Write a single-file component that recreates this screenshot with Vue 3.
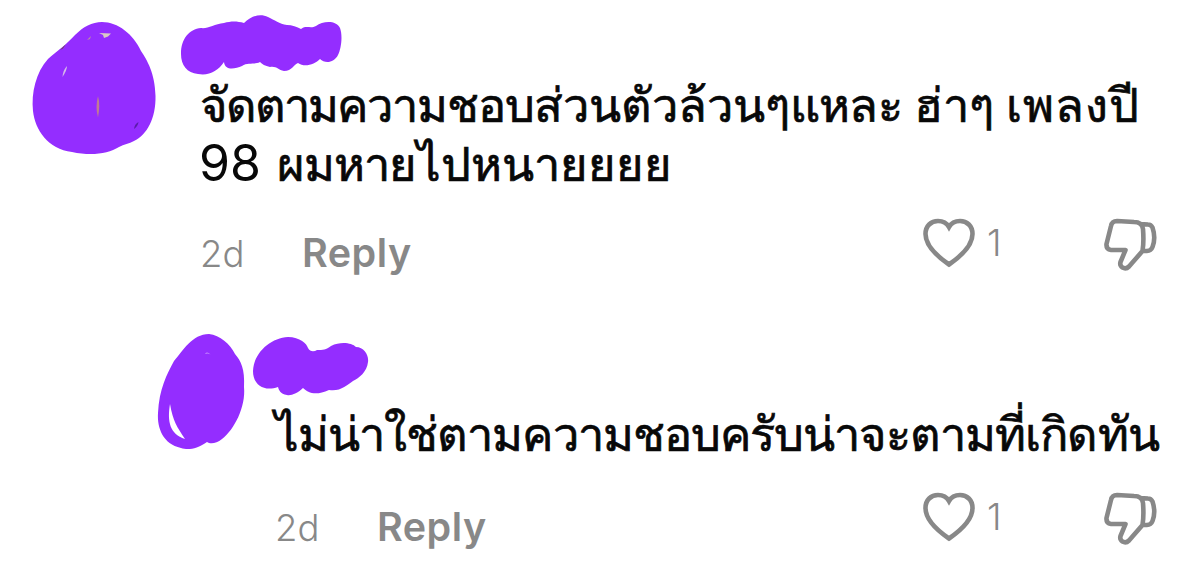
<script setup>
import { ref } from "vue"

const comments = ref([
  {
    id: 1,
    kind: "root",
    avatar: {
      box: "30 20 128 138",
      width: 128,
      height: 138,
      shape: "M102 22C118 22 133 34 141 51C147 60 155 73 155.500 96C156 118 147 135 134 141C129 144 124 144 119 147C108 154 91 156 72 152C48 149 35 130 33 111C31 93 36 72 48 59C57 51 66 45 75 35C83 27 92 22 102 22Z",
      gaps: [
        { d: "M99 33L111 33.500L108 36.500L104 38L103 35Z", fill: "#d9c9c4" },
        { d: "M87 40L91 36L90 39Z", fill: "#b98fa0" },
        { d: "M62.500 77Q63 70 67 66Q67 70 62.500 77Z", fill: "#d5b9e8" },
        { d: "M98 96Q100.500 105 98 117.500Q95 107 98 96Z", fill: "#c07a94" },
        { d: "M60 50L66 44L63 48.500Z", fill: "#6c4a50" },
        { d: "M134 129Q134.500 124 138.500 122Q138 126 134 129Z", fill: "#5a1cab" }
      ]
    },
    name: {
      box: "180 14 164 62",
      width: 164,
      height: 62,
      shape: "M181 54C181 39 189 29 201 28C208 29 214 24 224 23C231 21 237 21 244 23C251 16 260 13 268 17C275 20 279 24 287 25C292 25 297 27 301 29C306 25 311 29 316 26C323 21 336 20 340 28C343 36 341 49 338 55C334 63 325 64 320 59C315 64 305 68 298 63C294 64 292 71 284 71C278 70 277 66 270 67C265 66 262 64 260 62C254 65 248 62 242 66C235 69 225 71 224 62C218 71 209 76 198 74C187 73 181 65 181 54Z"
    },
    lines: [
      [
        { text: "จัดตาม", fit: "tightest" },
        { text: "ความชอบ", fit: "tight" },
        { text: "ส่วนตัวล้วนๆ", fit: "normal" },
        { text: "แหละ", fit: "tight" },
        { text: " ฮ่าๆ ", fit: "normal" },
        { text: "เพลงปี", fit: "loose" }
      ],
      [
        { text: "98", fit: "number" },
        { text: " ผมหาย", fit: "tight" },
        { text: "ไปหนายยยย", fit: "after" }
      ]
    ],
    time: "2d",
    likes: 1
  },
  {
    id: 2,
    kind: "child",
    avatar: {
      box: "156 332 90 120",
      width: 90,
      height: 120,
      shape: "M209 334C220 335 230 344 235 354C241 361 245 369 244 387C246 407 234 430 222 439C216 444 210 444 207 442C196 450 187 450 181 448C163 444 157 428 158 413C159 389 167 374 174 361C183 351 192 334 209 334Z",
      gaps: [
        { d: "M170 404C167 422 170 434 185 439C177 427 173 421 170 404Z", fill: "#fff" },
        { d: "M205 354Q207 351 210.500 354.500Q208 353 205 354Z", fill: "#c98bff" }
      ]
    },
    name: {
      box: "250 335 120 63",
      width: 120,
      height: 63,
      shape: "M253 371C254 352 271 338 288 337C300 337 307 344 308 348C310 352 314 352 317 350C323 350 326 350 331 346C341 341 352 343 356 347C364 347 369 355 368 362C367 372 359 378 353 381C347 385 340 392 329 390C316 396 308 393 303 388C298 393 291 396 287 395C280 394 279 390 278 387C264 392 253 385 253 371Z"
    },
    lines: [[{ text: "ไม่น่าใช่ตามความชอบครับน่าจะตามที่เกิดทัน", fit: "tight" }]],
    time: "2d",
    likes: 1
  }
])
</script>

<template>
  <main class="thread">
    <article v-for="c in comments" :key="c.id" class="comment" :class="c.kind">
      <svg class="avatar" :viewBox="c.avatar.box" :width="c.avatar.width" :height="c.avatar.height">
        <path class="paint" :d="c.avatar.shape" />
        <path v-for="(g, i) in c.avatar.gaps" :key="i" :d="g.d" :fill="g.fill" />
      </svg>

      <div class="body">
        <div class="name">
          <svg :viewBox="c.name.box" :width="c.name.width" :height="c.name.height">
            <path class="paint" :d="c.name.shape" />
          </svg>
        </div>

        <p class="text">
          <span v-for="(line, i) in c.lines" :key="i" class="line">
            <span v-for="(part, j) in line" :key="j" :class="part.fit">{{ part.text }}</span>
          </span>
        </p>

        <div class="actions">
          <span class="time">{{ c.time }}</span>
          <button class="reply">Reply</button>
          <button class="like">
            <svg class="heart" viewBox="0 0 52 50" width="52" height="50">
              <path d="M26 46.500C18 41 2.500 29 2.500 16C2.500 8 8 3 15 3C20 3 24 5.500 26 9C28 5.500 32 3 37 3C44 3 49.500 8 49.500 16C49.500 29 34 41 26 46.500Z" />
            </svg>
            <span>{{ c.likes }}</span>
          </button>
          <button class="dislike">
            <svg viewBox="0 0 54 54" width="54" height="54">
              <path d="M13 3L30 4Q38 4 39 11Q40 24 38.500 33L25 48.500Q22 51.500 18.500 49.500Q15.500 47.500 16.500 44L21.500 32L7 32Q2 31.500 2.500 26L7 8Q8 3 13 3ZM36 6L44 6.500Q47 6.500 48.500 9.500Q52 20 48.500 29Q47 33 43 33L38.500 33" />
            </svg>
          </button>
        </div>
      </div>
    </article>
  </main>
</template>

<style>
body {
  background: #fff;
}
</style>

<style scoped>
.thread {
  width: 1200px;
  height: 577px;
  overflow: hidden;
  background: #fff;
  font-family: "Inter", "Liberation Sans", sans-serif;
}

.comment {
  display: flex;
  align-items: flex-start;
  box-sizing: border-box;
}

.root {
  height: 320px;
  padding: 14px 0 0 30px;
}

.child {
  height: 257px;
  padding: 12px 0 0 156px;
}

.avatar {
  flex: none;
}

.root .avatar {
  margin-top: 6px;
}

.body {
  flex: 1;
}

.root .body {
  padding-left: 42px;
}

.child .body {
  padding: 3px 0 0 29px;
}

.paint {
  fill: #942dff;
}

.name {
  height: 61px;
}

.root .name {
  margin-left: -20px;
}

.child .name {
  margin-left: -25px;
}

.text {
  margin: 0;
  color: #080808;
  font-family: "Lato", sans-serif;
  -webkit-text-stroke: 0.7px #080808;
}

.line {
  display: block;
  height: 59px;
  line-height: 59px;
  font-size: 47px;
  white-space: pre;
}

.tightest {
  letter-spacing: -2px;
}

.tight {
  letter-spacing: -0.95px;
}

.loose {
  letter-spacing: 1px;
}

.after {
  margin-left: 1px;
}

.number {
  margin-left: -1px;
  margin-right: 5px;
  font-family: "Inter", sans-serif;
  font-size: 50px;
  line-height: 1;
  -webkit-text-stroke: 0;
}

.child .text {
  padding-top: 8px;
}

.actions {
  display: flex;
  align-items: flex-start;
  height: 60px;
  margin-top: 25px;
  color: #888;
}

.child .actions {
  margin-top: 29px;
}

.time {
  width: 102px;
  padding-top: 12px;
  font-size: 36.5px;
  font-weight: 300;
  line-height: 48px;
}

button {
  display: flex;
  padding: 0;
  border: none;
  background: none;
  color: inherit;
  font-family: inherit;
  cursor: pointer;
}

.reply {
  padding-top: 11px;
  font-size: 39.5px;
  font-weight: 600;
  letter-spacing: 0.5px;
  line-height: 48px;
}

.like {
  margin-left: auto;
  width: 181px;
  font-size: 37px;
  font-weight: 300;
  line-height: 50px;
}

.like span {
  margin-left: 12px;
}

.dislike {
  width: 96px;
}

.actions path {
  fill: none;
  stroke: #888;
  stroke-width: 4.6;
  stroke-linejoin: round;
}

.actions .heart path {
  stroke-linejoin: miter;
}
</style>
